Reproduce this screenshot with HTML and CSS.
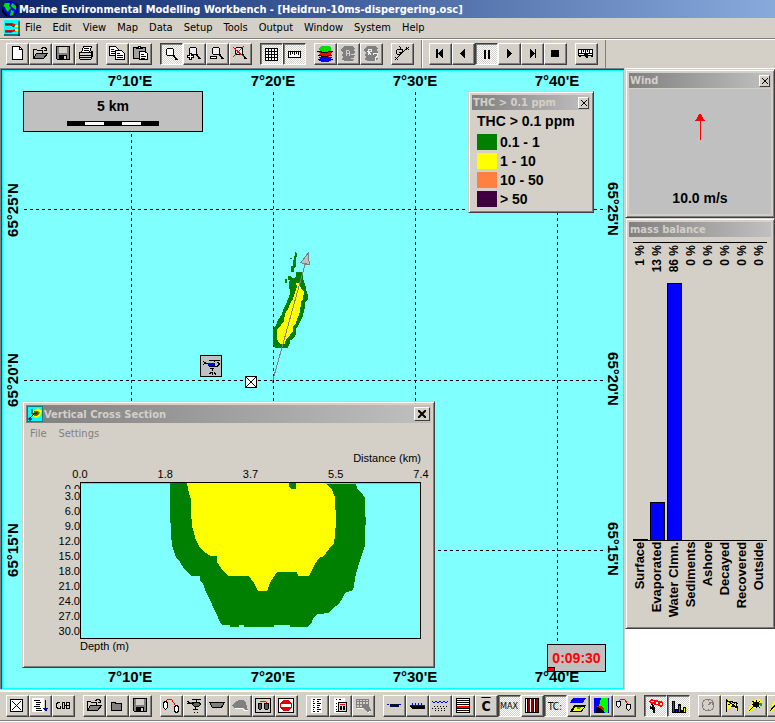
FILE: index.html
```html
<!DOCTYPE html>
<html lang="en">
<head>
<meta charset="utf-8">
<title>Marine Environmental Modelling Workbench</title>
<link rel="stylesheet" href="styles.css">
</head>
<body>
<header class="titlebar">
  <svg class="globe" viewBox="0 0 16 16"><circle cx="8" cy="8" r="8" fill="#000080"/><circle cx="8" cy="8" r="7" fill="#0000ff"/><path d="M3 2h5l-1 3 2 2-2 2-1 2-2-2-1-3-2-1zM10 2l4 3v4l-3-2-2-2zM9 9l3 1-1 4-3 1z" fill="#00e000"/><path d="M0 8l2 4 3 3M14 3l2 3" stroke="#000" stroke-width="2" fill="none"/></svg>
  <h1>Marine Environmental Modelling Workbench - [Heidrun-10ms-dispergering.osc]</h1>
</header>
<nav class="menubar">
  <svg class="docicon" viewBox="0 0 16 16"><path d="M0 0h16v16H0z" fill="#0ff"/><path d="M1 4h7l4 2M1 11h8l3-1" stroke="#f00" stroke-width="2" fill="none"/><path d="M1 5h6l3 2M1 12h7" stroke="#222" fill="none"/><path d="M11 5h4v2h-4zM11 9h4v2h-4z" fill="#ff0"/><path d="M15 1v15M0 15h16" stroke="#000"/></svg>
  <button>File</button><button>Edit</button><button>View</button><button>Map</button><button>Data</button><button>Setup</button><button>Tools</button><button>Output</button><button>Window</button><button>System</button><button>Help</button>
</nav>
<div class="toolbar top">
  <div class="band">
    <div class="group">
      <button class="tool" aria-label="New"><svg viewBox="0 0 16 16"><path d="M3.500.5h7l3 3v10h-10z" fill="#fff" stroke="#000"/><path d="M10.500.5v3h3" fill="none" stroke="#000"/></svg></button>
      <button class="tool" aria-label="Open"><svg viewBox="0 0 16 16"><path d="M1.500 12.500v-9h3l1 1h5v3" fill="#d4d0c8" stroke="#000"/><path d="M1.500 12.500l3-5h11l-4 5z" fill="#808080" stroke="#000"/><path d="M9 2h1v-1h3v1h1v2M12 4h3M14 2v3" stroke="#000" fill="none"/></svg></button>
      <button class="tool" aria-label="Save"><svg viewBox="0 0 16 16"><path d="M1.500.5h13v13h-12l-1-1z" fill="#808080" stroke="#000"/><path d="M4 1h8v6H4z" fill="#d4d0c8"/><path d="M4 9h8v5H4z"/><path d="M9 10h2v3H9z" fill="#d4d0c8"/></svg></button>
      <button class="tool" aria-label="Print"><svg viewBox="0 0 16 16"><path d="M5.500 0.500h8l-2 6h-8z" fill="#fff" stroke="#000"/><path d="M6 2h5M6 4h5" stroke="#000"/><path d="M1.500 6.500h11l2-1v5l-2 3h-10l-1-1z" fill="#d4d0c8" stroke="#000"/><path d="M1 9h13M2 11h11M13 6v5" stroke="#000"/></svg></button>
    </div>
    <div class="group">
      <button class="tool" aria-label="Copy"><svg viewBox="0 0 16 16"><path d="M.5.5h6l3 3v6h-9z" fill="#fff" stroke="#000"/><path d="M2 3h3M2 5h4M2 7h4" stroke="#000"/><path d="M6.500 4.500h6l3 3v6h-9z" fill="#fff" stroke="#000"/><path d="M8 7h3M8 9h6M8 11h6" stroke="#000"/></svg></button>
      <button class="tool" aria-label="Paste"><svg viewBox="0 0 16 16"><path d="M1.500 1.500h12v11h-12z" fill="#a0a09c" stroke="#000"/><path d="M4.500 2.500v-1h2v-1h2v1h2v1z" fill="#fff" stroke="#000"/><path d="M7.500 5.500h5l3 2v6h-8z" fill="#fff" stroke="#000"/><path d="M9 8h3M9 10h5M9 12h4" stroke="#000"/></svg></button>
    </div>
    <div class="group">
      <button class="tool pressed" aria-label="Zoom"><svg viewBox="0 0 16 16"><circle cx="7" cy="6" r="4" fill="#fff" stroke="#000"/><path d="M10 9l4 5" stroke="#000" stroke-width="2"/></svg></button>
      <button class="tool" aria-label="Zoom in"><svg viewBox="0 0 16 16"><circle cx="7" cy="5" r="4" fill="#eee" stroke="#000"/><path d="M10 8l4 5" stroke="#000" stroke-width="2"/><path d="M3.500 7.500h2v2h2v2h-2v2h-2v-2h-2v-2h2z" fill="#fff" stroke="#000"/></svg></button>
      <button class="tool" aria-label="Zoom out"><svg viewBox="0 0 16 16"><circle cx="7" cy="5" r="4" fill="#eee" stroke="#000"/><path d="M10 8l4 5" stroke="#000" stroke-width="2"/><path d="M1.500 10.500h6v2h-6z" fill="#fff" stroke="#000"/></svg></button>
      <button class="tool" aria-label="Reset zoom"><svg viewBox="0 0 16 16"><circle cx="7" cy="5" r="4" fill="#eee" stroke="#000"/><path d="M10 8l4 5" stroke="#000" stroke-width="2"/><path d="M1 1l11 10M12 0L1 11" stroke="#f00"/></svg></button>
    </div>
    <div class="group">
      <button class="tool pressed" aria-label="Grid"><svg viewBox="0 0 16 16"><path d="M2.500 2.500h12v12h-12zM5.500 2v13M8.500 2v13M11.500 2v13M2 5.500h13M2 8.500h13M2 11.500h13" fill="#fff" stroke="#000"/></svg></button>
      <button class="tool pressed" aria-label="Ruler"><svg viewBox="0 0 16 16"><path d="M2.500 5.500h12v6h-12z" fill="#fff" stroke="#000"/><path d="M4.500 6v3M6.500 6v2M8.500 6v3M10.500 6v2M12.500 6v3" stroke="#000"/></svg></button>
    </div>
    <div class="group">
      <button class="tool" aria-label="Layers"><svg viewBox="0 0 16 16"><path d="M1 11h14l-2 2 2 1-4 2H5l-4-2 2-1z" fill="#00f"/><path d="M1 6h14l-2 2 2 1-4 2H5L1 9l2-1z" fill="#f00"/><path d="M1 3l4-3h7l3 2-2 1 2 1-4 2H5z" fill="#0d0"/><path d="M0 5.500h5M11 5.500h5M1 9.500h4M10 9.500h5M1 13.500h3M10 13.500h6M4 6.500h7M4 10.500h7" stroke="#000" fill="none"/></svg></button>
      <button class="tool" disabled aria-label="Layer setup"><svg viewBox="0 0 16 16"><path d="M1 3l4-3h7l3 2-2 2 2 2-2 2 2 1-2 2 2 1-3 3H5l-4-2 2-2-2-2 2-2-2-2z" fill="#808080"/><path d="M6.500 4v6M6 4.500h3M9.500 5v2M6 7.500h3l1 2M11 8.500h4M11 12.500h4M1 10.500h2" stroke="#d4d0c8" fill="none"/></svg></button>
      <button class="tool" disabled aria-label="Layer help"><svg viewBox="0 0 16 16"><path d="M1 3l4-3h7l3 2-2 2 2 2-2 2 2 1-2 2 2 1-3 3H5l-4-2 2-2-2-2 2-2-2-2z" fill="#808080"/><path d="M5.500 3v6M5 3.500h3v2H5l3 3M10 8.500l1-1h3v3l-2 2v1M12 14.500h1" stroke="#f0eee8" fill="none"/></svg></button>
    </div>
    <div class="group">
      <button class="tool" aria-label="Track"><svg viewBox="0 0 16 16"><path d="M2 13L13 2M1 11l3 3M4 11l-3 3M12 1l3 3M15 1l-3 3M2 5l2-2h4v3l-2 2H3zM5 0l2 2-2 2M5 6h4" stroke="#000" fill="none"/></svg></button>
    </div>
  </div>
  <div class="band">
    <div class="group">
      <button class="tool" aria-label="First"><svg viewBox="0 0 16 16"><path d="M4 3h2v9H4zM11 3v9L6 8V7z"/></svg></button>
      <button class="tool" aria-label="Back"><svg viewBox="0 0 16 16"><path d="M10 3v9L5 8V7z"/></svg></button>
      <button class="tool pressed" aria-label="Pause"><svg viewBox="0 0 16 16"><path d="M6 4h2v9H6zM10 4h2v9h-2z"/></svg></button>
      <button class="tool" aria-label="Play"><svg viewBox="0 0 16 16"><path d="M6 3v9l5-4V7z"/></svg></button>
      <button class="tool" aria-label="Last"><svg viewBox="0 0 16 16"><path d="M6 3v9l5-4V7zM11 3h1v9h-1z"/></svg></button>
      <button class="tool" aria-label="Stop"><svg viewBox="0 0 16 16"><path d="M4 4h8v7H4z"/></svg></button>
    </div>
    <div class="group">
      <button class="tool" aria-label="Time line"><svg viewBox="0 0 16 16"><path d="M.5 3.500h14v6H.5z" fill="#fff" stroke="#000"/><path d="M3.500 4v3M5.500 4v2M7.500 4v3M9.500 4v2M11.500 4v3M0 7.500h15" stroke="#000"/><path d="M6 8h4v4H8l-2-2zM1 9h2v2H1zM13 9h2v2h-2z"/></svg></button>
    </div>
  </div>
</div>

<main class="workspace">
  <section class="map" aria-label="Map">
    <svg class="chart" viewBox="3 71 620 618" width="620" height="618">
      <g class="grid"><path d="M131.500 92v573M273.500 92v573M415.500 92v573M557.500 92v573M24 209.500h580M24 380.500h580M24 550.500h580"/></g>
      <g class="axis">
        <text x="130" y="86">7°10'E</text><text x="273" y="86">7°20'E</text><text x="415" y="86">7°30'E</text><text x="557" y="86">7°40'E</text>
        <text x="130" y="682">7°10'E</text><text x="273" y="682">7°20'E</text><text x="415" y="682">7°30'E</text><text x="557" y="682">7°40'E</text>
        <text transform="translate(18 210) rotate(-90)">65°25'N</text><text transform="translate(18 380) rotate(-90)">65°20'N</text><text transform="translate(18 550) rotate(-90)">65°15'N</text>
        <text transform="translate(608 209) rotate(90)">65°25'N</text><text transform="translate(608 379) rotate(90)">65°20'N</text><text transform="translate(608 549) rotate(90)">65°15'N</text>
      </g>
      <svg x="180" y="240" width="150" height="160" viewBox="0 0 450 480">
        <path fill="#008000" d="M348 96h16l6 9v15l6 15 3 15 5 15v15l-8 6-3 25-6 21-12 24-6 9v18l-9 12-9 6-3 12-6 12h-36l-6-12v-45l9-15 6-15 9-12 6-18 9-18 6-15 6-15-3-15v-21l6-12 12 3zM345 36l6 6-3 18v18l-6 6v12h-9v-18h6v-18h3zM330 54h6v3h-6zM315 117h6v12h-6zM324 108h9v12h-9z"/>
        <path fill="#ff0" d="M348 129h9l6 15 9 12-3 21-6 9-3 30-6 15-6 18-9 9v15l-9 12-12 12-3 15h-15l-9-15v-27l12-15 9-12 3-21 9-15 6-15 9-15 6-21 6-15z"/>
        <path d="M276 430l100-360" stroke="#808080" stroke-width="3" fill="none"/>
        <path d="M385 38l-22 30 25 6z" fill="#c0c0c0" stroke="#808080" stroke-width="3"/>
        <path d="M61 346h64v64H61z" fill="#c0c0c0" stroke="#000" stroke-width="3"/>
        <path d="M87 361h33M103 361v6M69 364l9 6h10M69 373l9-3M88 378h24l6-6-6-6M97 384v9M91 386h12M88 403l6-6M108 403l-6-6M97 397v9" stroke="#000" stroke-width="3" fill="none"/>
        <path d="M84 368h20v9H84z" fill="#0000e0"/>
        <path d="M196 409h33v33h-33z" fill="#fff" stroke="#000" stroke-width="3"/>
        <path d="M198 411l30 30M228 411l-30 30" stroke="#000" stroke-width="3"/>
      </svg>
    </svg>
    <div class="scale"><span>5 km</span><div class="rule"><i></i><i></i></div></div>
    <div class="timer">0:09:30<i></i></div>

    <section class="window legend">
      <header class="caption"><h2>THC &gt; 0.1 ppm</h2><button class="close" aria-label="Close"><svg viewBox="0 0 8 8"><path d="M1 1l6 6M7 1L1 7"/></svg></button></header>
      <h3>THC &gt; 0.1 ppm</h3>
      <ul>
        <li><i class="c1"></i>0.1 - 1</li><li><i class="c2"></i>1 - 10</li><li><i class="c3"></i>10 - 50</li><li><i class="c4"></i>&gt; 50</li>
      </ul>
    </section>

    <section class="window section">
      <header class="caption big"><svg class="capicon" viewBox="0 0 16 16"><path d="M0 0h16v16H0z" fill="#008080"/><path d="M1 1h14v14H1z" fill="#0ff"/><path d="M6 5l5-3 4 3-2 5-4 2-4-2z" fill="#ff0"/><path d="M7 5h4l2 2-3 3H7z" fill="#0a0"/><path d="M8 6h3v3H8z" fill="#f00"/><path d="M2 13L8 7M5 3v5l5-1M2 12h2v2H2z" stroke="#003" fill="none"/></svg><h2>Vertical Cross Section</h2><button class="close" aria-label="Close"><svg viewBox="0 0 8 8"><path d="M0 0l8 8M8 0L0 8" stroke-width="2"/></svg></button></header>
      <div class="submenu"><button>File</button><button>Settings</button></div>
      <div class="profile">
        <div class="xtitle">Distance (km)</div>
        <div class="xaxis"><span>0.0</span><span>1.8</span><span>3.7</span><span>5.5</span><span>7.4</span></div>
        <div class="yaxis"><span class="cut">0.0</span><span>3.0</span><span>6.0</span><span>9.0</span><span>12.0</span><span>15.0</span><span>18.0</span><span>21.0</span><span>24.0</span><span>27.0</span><span>30.0</span></div>
        <svg class="plot" viewBox="80 482 341 157">
          <path d="M80 482h341v157H80z" fill="#80ffff"/><path d="M81 483.500h339" stroke="#0ff"/>
          <path fill="#008000" d="M170 483v37l1 5v10l1 10 2 7 2 5 4 5 4 7 4 4 4 3h8v4l3 4 3 8 4 8 4 9 3 6 2 5 3 5h8v2h9v-2h5v2h30v-2h16v2h17l4-3 3-7 4-3 11-1 4-5 6-4 4-7 3-5 6-1 2-4 1-9 4-15 5-14 1-3v-17l1-8-1-8v-15l-3-5-4-3-2-6z"/>
          <path fill="#ff0" d="M187 483l1 6 3 11v10l1 17 2 5 1 6 3 6 3 5 5 4 5 3h6v6l4 6 3 4 4 4h21l5 7 4 8h9l3-8 3-5 4-6h20l1 4h11l3-6 3-6 4-6 5-2 5-7 5-6 1-8 1-13v-8l-1-9v-8l-4-9-6-5-1-6z"/>
          <path fill="#008000" d="M289 483h7v5l-1 1h-4l-2-2z"/>
          <path d="M80.500 482.500h340v156h-340z" fill="none" stroke="#000"/>
        </svg>
        <div class="ytitle">Depth (m)</div>
      </div>
    </section>
  </section>

  <aside class="side">
    <section class="window wind">
      <header class="caption"><h2>Wind</h2><button class="close" aria-label="Close"><svg viewBox="0 0 8 8"><path d="M1 1l6 6M7 1L1 7"/></svg></button></header>
      <div class="windbody"><svg viewBox="0 0 10 28"><path d="M5 0l5 8H0z" fill="#f00"/><path d="M5.500 6v21" stroke="#f00"/></svg><span>10.0 m/s</span></div>
    </section>
    <section class="window balance">
      <header class="caption"><h2>mass balance</h2></header>
      <div class="bars">
        <div class="col"><span class="pct">1 %</span><i style="height:0.5%"></i></div>
        <div class="col"><span class="pct">13 %</span><i style="height:12.8%"></i></div>
        <div class="col"><span class="pct">86 %</span><i style="height:86.4%"></i></div>
        <div class="col"><span class="pct">0 %</span></div>
        <div class="col"><span class="pct">0 %</span></div>
        <div class="col"><span class="pct">0 %</span></div>
        <div class="col"><span class="pct">0 %</span></div>
        <div class="col"><span class="pct">0 %</span></div>
      </div>
      <div class="names"><span>Surface</span><span>Evaporated</span><span>Water Clmn.</span><span>Sediments</span><span>Ashore</span><span>Decayed</span><span>Recovered</span><span>Outside</span></div>
    </section>
  </aside>
</main>

<div class="toolbar bottom">
  <div class="group">
    <button class="tool" aria-label="Release site"><svg viewBox="0 0 16 16"><path d="M1.500 1.500h12v12h-12z" fill="#fff" stroke="#000"/><path d="M3 3l9 9M12 3l-9 9" stroke="#000"/></svg></button>
    <button class="tool" aria-label="Sort list"><svg viewBox="0 0 16 16"><path d="M0 0h12v14H0z" fill="#fff"/><path d="M2 2.500h6M4 4.500h5M4 6.500h4M2 8.500h6M4 10.500h5M4 12.500h6" stroke="#000"/><path d="M13.500 2v11M11 10.500h5M12 11.500h3M13 12.500h2" stroke="#00a"/></svg></button>
    <button class="tool" aria-label="Chemicals"><svg viewBox="0 0 16 16"><path d="M5 4.500H3L1.500 6v3L3 10.500h2v-3M7 4.500h2v6H7zM10 7h1M11.500 4v7M14.500 4v7M11 4.500h4M11 7.500h4M11 10.500h4" fill="none" stroke="#000"/></svg></button>
  </div>
  <div class="group">
    <button class="tool" aria-label="Open scenario"><svg viewBox="0 0 16 16"><path d="M1.500 12.500v-9h3l1 1h5v3" fill="#d4d0c8" stroke="#000"/><path d="M1.500 12.500l3-5h11l-4 5z" fill="#808080" stroke="#000"/><path d="M9 2h1v-1h3v1h1v2M12 4h3M14 2v3" stroke="#000" fill="none"/></svg></button>
    <button class="tool" aria-label="Close scenario"><svg viewBox="0 0 16 16"><path d="M2.500 12.500v-8h3l1 1h6v7z" fill="#808080" stroke="#000"/><path d="M3 4.500h4" stroke="#000"/></svg></button>
    <button class="tool" aria-label="Save scenario"><svg viewBox="0 0 16 16"><path d="M1.500.5h13v13h-12l-1-1z" fill="#808080" stroke="#000"/><path d="M4 1h8v6H4z" fill="#d4d0c8"/><path d="M4 9h8v5H4z"/><path d="M9 10h2v3H9z" fill="#d4d0c8"/></svg></button>
  </div>
  <div class="group">
    <button class="tool" aria-label="Boom"><svg viewBox="0 0 16 16"><path d="M3 3l2-2 4 1 3 5" stroke="#f00" fill="none"/><path d="M.5 4.500l2-1 2 1v5l-2 2-2-2zM11.500 8.500l2-1 2 1v5l-2 1-2-1z" fill="#fff" stroke="#000"/></svg></button>
    <button class="tool" aria-label="Helicopter"><svg viewBox="0 0 16 16"><path d="M6 1.500h9M10.500 2v2M1 3l3 2h4M1 5h3M8 8h5l2-2-3-2H6l1 3zM9.500 8v3M7 11.500h5M8 14h1M11 14h1" stroke="#000" fill="#666"/></svg></button>
    <button class="tool" aria-label="Vessel"><svg viewBox="0 0 16 16"><path d="M.5 4.500h15l-3 5h-9z" fill="#808080" stroke="#000"/></svg></button>
    <button class="tool" disabled aria-label="Skimmer"><svg viewBox="0 0 16 16"><path d="M0 8l3-4 4-2h4l3 3 1 3v2l1 2h-2l-3-2H2z" fill="#808080"/><path d="M3 10.500h7l3 2h3" stroke="#fff" fill="none"/></svg></button>
    <button class="tool" aria-label="Boom setup"><svg viewBox="0 0 16 16"><path d="M.5.5h15v14H.5z" fill="#d4d0c8" stroke="#000"/><path d="M5 4l2-1h3l2 2" stroke="#f00" fill="none"/><path d="M3 5h3v6l-1 1-2-2zM9 5h4v6l-2 1-2-2z" fill="#555" stroke="#000"/></svg></button>
    <button class="tool" aria-label="No entry"><svg viewBox="0 0 16 16"><path d="M.5.5h15v14H.5z" fill="#fff" stroke="#000"/><circle cx="8" cy="7.500" r="6" fill="#e00000"/><path d="M3 6h10v3H3z" fill="#fff"/></svg></button>
  </div>
  <div class="group">
    <button class="tool" aria-label="Report"><svg viewBox="0 0 16 16"><path d="M2 0h11v15H2z" fill="#fff"/><path d="M4 1.500h2M4 3.500h1M4 5.500h2M4 7.500h1M4 9.500h2M4 11.500h1M4 13.500h2M8 1.500h4M8 3.500h2M8 5.500h4M8 7.500h3M8 9.500h2M8 11.500h4M8 13.500h2" stroke="#000"/></svg></button>
    <button class="tool" aria-label="Response report"><svg viewBox="0 0 16 16"><path d="M2 0h11v15H2z" fill="#fff"/><path d="M4 1.500h1M7 1.500h2M4 5.500h1M4 8.500h1M4 11.500h1M4 13.500h2" stroke="#000"/><path d="M6.500 4.500h8v9h-8z" fill="#ddd" stroke="#000"/><path d="M8 6.500h5" stroke="#f00"/><path d="M8 8h2v4H8zM11 8h2v4h-2z"/></svg></button>
    <button class="tool" disabled aria-label="Table"><svg viewBox="0 0 16 16"><path d="M1.500 1.500h12v8h-12zM1 3.500h12M1 6.500h12M4.500 1v8M7.500 1v8M10.500 1v8" stroke="#808080" fill="none"/><path d="M8 6h5l3 6-2 3-6-5z" fill="#808080"/><path d="M15 13l-2 2M2 10.500h6" stroke="#fff"/></svg></button>
  </div>
  <div class="group">
    <button class="tool" aria-label="Surface"><svg viewBox="0 0 16 16"><path d="M1 6.500h15" stroke="#00f" stroke-dasharray="2 1"/><path d="M4 6h9v3H4z" fill="#001040"/></svg></button>
    <button class="tool" aria-label="Subsurface"><svg viewBox="0 0 16 16"><path d="M1 7.500h15M3.500 5v3M6.500 5v3M9.500 5v3M12.500 5v3" stroke="#00f"/><path d="M1 8h15v3H3z"/></svg></button>
    <button class="tool" aria-label="Dispersed"><svg viewBox="0 0 16 16"><path d="M0 3l2 2 2-2 2 2 2-2 2 2 2-2 2 2 2-2" stroke="#00f" fill="none"/><path d="M2 8.500h14M0 10.500h14M3 12.500h10" stroke="#000" stroke-dasharray="1 2"/></svg></button>
    <button class="tool" aria-label="Layers by depth"><svg viewBox="0 0 16 16"><path d="M1.500.5h13v14h-13z" fill="#fff" stroke="#000"/><path d="M1 2.500h14M1 4.500h14M1 6.500h14M1 10.500h14M1 12.500h14" stroke="#000"/><path d="M2 8h12v2H2z" fill="#f00"/></svg></button>
    <button class="tool cbar">C</button>
    <button class="tool pressed tiny">MAX</button>
    <button class="tool" aria-label="Vertical bands"><svg viewBox="0 0 16 16"><path d="M1.500.5h13v14h-13zM3.500 0v15M9.500 0v15M11.500 0v15" fill="#fff" stroke="#000"/><path d="M4.500 1v13M7.500 1v13" stroke="#900" stroke-width="2"/><path d="M12 1h2v13h-2z" fill="#900"/></svg></button>
    <button class="tool pressed tc">TC:</button>
    <button class="tool" aria-label="Map view"><svg viewBox="0 0 16 16"><path d="M3 0h13l-3 5H0z" fill="#00f"/><path d="M4 7h12l-4 7H0z"/><path d="M5 9h9l-4 4H3z" fill="#ff0"/><path d="M7 9h4l-2 2H7z" fill="#0c0"/></svg></button>
    <button class="tool" aria-label="Region"><svg viewBox="0 0 16 16"><path d="M1 0h15v15H1z" fill="#00f"/><path d="M8 0h7v15h-3l-2-5-4-2z" fill="#0f0"/><path d="M3 9l4 1 4 3v2H3z"/><path d="M3 8h5l3 3v2L7 10z" fill="#f00"/></svg></button>
    <button class="tool" aria-label="Boom track"><svg viewBox="0 0 16 16"><path d="M3 3l2-2 4 1 3 4" stroke="#f00" fill="none"/><path d="M.5 3.500h4v4l-2 2-2-2zM10.500 6.500h4v4l-2 2-2-2z" fill="#eee" stroke="#000"/></svg></button>
  </div>
  <div class="group">
    <button class="tool pressed" aria-label="Wind sock"><svg viewBox="0 0 16 16"><path d="M2 3l2-2 4 1 6 1 2 2v3l-2 1-4-2-6-1z" fill="#f00"/><path d="M9 4h2v2H9zM13 5h2v2h-2zM4 3h3v1H4z" fill="#fff"/><path d="M5 6l2 4v5M3 9l3 2" stroke="#000" stroke-width="2" fill="none"/></svg></button>
    <button class="tool pressed" aria-label="Mass balance"><svg viewBox="0 0 16 16"><path d="M2 3v12h14v-6h-3v3h-2V6H8v5H5V3z"/><path d="M3 4h1v10H3z" fill="#f00"/><path d="M6 12h1v2H6z" fill="#00f"/><path d="M9 8h1v6H9z" fill="#0a0"/><path d="M14 10h1v4h-1z" fill="#ff0"/></svg></button>
  </div>
  <div class="group">
    <button class="tool" disabled aria-label="Clock"><svg viewBox="0 0 16 16"><circle cx="7" cy="7" r="6" fill="none" stroke="#808080"/><path d="M7 7l3-2M8 4h3v3M7 2v1M2 7h1M7 11v1" stroke="#808080" fill="none"/></svg></button>
    <button class="tool" aria-label="Flag"><svg viewBox="0 0 16 16"><path d="M3 2l6 1 5 3v7l-5-4-6 2z" fill="#ff0"/><path d="M2 1v13M3 2l11 9M4 7l6-3 4 2M7 9l5-5M12 4l2 9M3 3h6M8 8h6" stroke="#000" fill="none"/></svg></button>
    <button class="tool" aria-label="Plume"><svg viewBox="0 0 16 16"><path d="M5 5l3-4h5l2 3-3 6H7L2 14l-1-2z" fill="#ff0"/><path d="M2 13l5-5" stroke="#000"/><path d="M6 4h6v5H6zM5 3h2v1H5zM9 2h1v8H9zM12 3h1v1h-1zM5 6h8v1H5zM12 9h1v1h-1z"/><path d="M12 5h3v3h-2z" fill="#0a0"/></svg></button>
    <button class="tool" aria-label="Plume section"><svg viewBox="0 0 16 16"><path d="M3 4l4-3 4 3-3 5-4 2-3 3z" fill="#ff0"/><path d="M0 13l6-7M5 3l5 6M9 2L5 9" stroke="#000"/></svg></button>
  </div>
</div>
</body>
</html>
```
FILE: styles.css
```css
* { box-sizing: border-box; margin: 0; padding: 0; }
html, body { height: 100%; }
body {
  display: flex;
  flex-direction: column;
  overflow: hidden;
  background: #d4d0c8;
  color: #000;
  font: 11px "DejaVu Sans Condensed", "Open Sans", sans-serif;
}
button { font: inherit; color: inherit; border: 0; background: none; }
svg { display: block; flex: none; }
h1, h2, h3 { font-size: inherit; }
ul { list-style: none; }

.titlebar {
  flex: none;
  display: flex;
  align-items: center;
  gap: 1px;
  height: 18px;
  padding-left: 2px;
  background: linear-gradient(to right, #0a246a, #88aadb);
  color: #fff;
  white-space: nowrap;
}
.globe { width: 16px; height: 16px; }

.menubar {
  flex: none;
  display: flex;
  align-items: center;
  height: 21px;
  padding-left: 4px;
  border-bottom: 1px solid #808080;
}
.docicon { width: 16px; height: 16px; }
.menubar button { padding: 0 6px 1px 5px; }

.toolbar { flex: none; display: flex; overflow: hidden; border-top: 1px solid #fff; }
.toolbar.top { height: 29px; }
.band { display: flex; gap: 8px; padding: 3px 7px 0 6px; border-right: 1px solid #808080; }
.band + .band { border-left: 1px solid #fff; }
.toolbar.bottom {
  gap: 8px;
  height: 32px;
  padding: 3px 0 0 6px;
  background: linear-gradient(#808080, #808080) 0 28px / 100% 1px no-repeat, linear-gradient(#fff, #fff) 0 29px / 100% 1px no-repeat;
}
.group { display: flex; flex: none; }
.tool {
  display: flex;
  flex: none;
  align-items: center;
  justify-content: center;
  width: 23px;
  height: 22px;
  padding-right: 1px;
  overflow: hidden;
  border: 1px solid;
  border-color: #fff #404040 #404040 #fff;
  box-shadow: inset -1px -1px #808080;
}
.tool svg { width: 16px; height: 16px; shape-rendering: crispEdges; }
.pressed {
  border-color: #404040 #fff #fff #404040;
  box-shadow: inset 1px 1px #808080;
  background: repeating-conic-gradient(#fff 0 25%, #d4d0c8 0 50%) 0 0 / 2px 2px;
}
.tiny { font-size: 9px; }
.tc { font-size: 10px; }
.cbar { font-size: 14px; font-weight: bold; text-decoration: overline; }

.workspace { flex: 1; display: flex; min-height: 0; background: #fff; border-bottom: 1px solid #fff; }
.map {
  flex: 1;
  position: relative;
  overflow: hidden;
  background: #80ffff;
  border: solid #d4d0c8;
  border-width: 0 1px 1px 0;
  box-shadow: inset 1px 1px #808080, inset 2px 2px #404040, inset 3px 3px #0ff, inset -1px -1px #0ff;
}
.chart { position: absolute; left: 3px; top: 3px; shape-rendering: crispEdges; }
.grid path { fill: none; stroke: #000; stroke-dasharray: 3 3; }
.axis text, .scale, .timer, .legend h3, .legend li, .windbody, .bars, .names {
  font-family: "Liberation Sans", sans-serif;
  font-weight: bold;
}
.axis text { font-size: 15px; text-anchor: middle; }

.scale {
  position: absolute;
  left: 23px;
  top: 23px;
  width: 180px;
  height: 41px;
  padding-top: 5px;
  border: 1px solid #000;
  background: #c0c0c0;
  font-size: 14px;
  line-height: 18px;
  text-align: center;
}
.rule { display: flex; gap: 18px; width: 92px; height: 5px; margin: 6px auto 0; padding: 1px 18px; background: #000; }
.rule i { flex: 1; background: #fff; }

.timer {
  position: absolute;
  right: 18px;
  bottom: 17px;
  width: 59px;
  height: 28px;
  border: 1px solid #000;
  background: #c0c0c0;
  color: #f00;
  font-size: 14px;
  line-height: 26px;
  text-align: center;
}
.timer i { position: absolute; left: -1px; bottom: -1px; width: 8px; height: 5px; background: #f00; border: 1px solid #000; }

.window {
  background: #d4d0c8;
  border: 1px solid;
  border-color: #d4d0c8 #404040 #404040 #d4d0c8;
  box-shadow: inset 1px 1px #fff, inset -1px -1px #808080;
  padding: 3px;
}
.caption {
  display: flex;
  align-items: center;
  height: 15px;
  padding: 0 1px;
  background: linear-gradient(to right, #808080, #c0c0c0);
  color: #d4d0c8;
}
.caption h2 { flex: 1; white-space: nowrap; }
.close {
  display: grid;
  place-items: center;
  width: 11px;
  height: 12px;
  background: #d4d0c8;
  border: 1px solid;
  border-color: #fff #404040 #404040 #fff;
}
.close svg { width: 8px; height: 8px; stroke: #000; }

.legend { position: absolute; left: 468px; top: 23px; width: 126px; height: 122px; }
.legend h3 { padding: 3px 5px 2px; font-size: 14px; line-height: 17px; }
.legend li { display: flex; align-items: center; gap: 3px; height: 19px; padding-left: 5px; font-size: 14px; }
.legend li i { width: 20px; height: 16px; }
.c1 { background: #008000; }
.c2 { background: #ff0; }
.c3 { background: #ff8040; }
.c4 { background: #400040; }

.section { position: absolute; left: 22px; top: 333px; width: 413px; height: 267px; }
.caption.big { height: 18px; gap: 1px; }
.capicon { width: 16px; height: 16px; }
.big .close { width: 16px; height: 14px; }
.submenu { display: flex; gap: 12px; padding: 4px; color: #808080; line-height: 14px; }
.profile {
  display: grid;
  grid-template-columns: 54px 341px;
  grid-template-rows: 16px 15px 157px 17px;
  padding-top: 6px;
  font-family: "Liberation Sans", sans-serif;
  line-height: 15px;
}
.xtitle { grid-column: 2; text-align: right; }
.xaxis { grid-column: 2; display: flex; justify-content: space-between; margin: 0 -15px; }
.xaxis span { width: 30px; text-align: center; }
.yaxis { grid-row: 3; display: flex; flex-direction: column; padding-top: 1px; text-align: right; }
.yaxis span { height: 15px; }
.yaxis .cut { height: 7px; overflow: hidden; line-height: 12px; }
.plot { width: 341px; height: 157px; shape-rendering: crispEdges; }
.ytitle { grid-column: 2; }

.side { flex: none; width: 150px; padding-top: 1px; }
.wind { height: 149px; display: flex; flex-direction: column; }
.windbody {
  flex: 1;
  display: flex;
  flex-direction: column;
  align-items: center;
  justify-content: space-between;
  margin-top: 1px;
  padding: 24px 0 8px;
  background: #c0c0c0;
  font-size: 14px;
}
.windbody svg { width: 10px; height: 28px; shape-rendering: crispEdges; }
.balance { height: 411px; }
.bars {
  display: grid;
  grid-template-columns: repeat(8, 17px);
  height: 299px;
  margin: 5px 4px 0;
  border: solid #000;
  border-width: 1px 0;
}
.col { position: relative; display: flex; align-items: flex-end; padding-right: 2px; }
.col i { flex: 1; min-height: 1px; background: #00f; border: 1px solid #000; border-bottom: 0; }
.pct { position: absolute; top: 2px; left: -1px; width: 17px; }
.pct, .names span {
  writing-mode: vertical-rl;
  transform: rotate(180deg);
  font-size: 13px;
  line-height: 17px;
}
.pct { font-size: 12px; }
.names { display: grid; grid-template-columns: repeat(8, 17px); margin: 1px 2px 0; }
.names span { text-align: right; }
```
